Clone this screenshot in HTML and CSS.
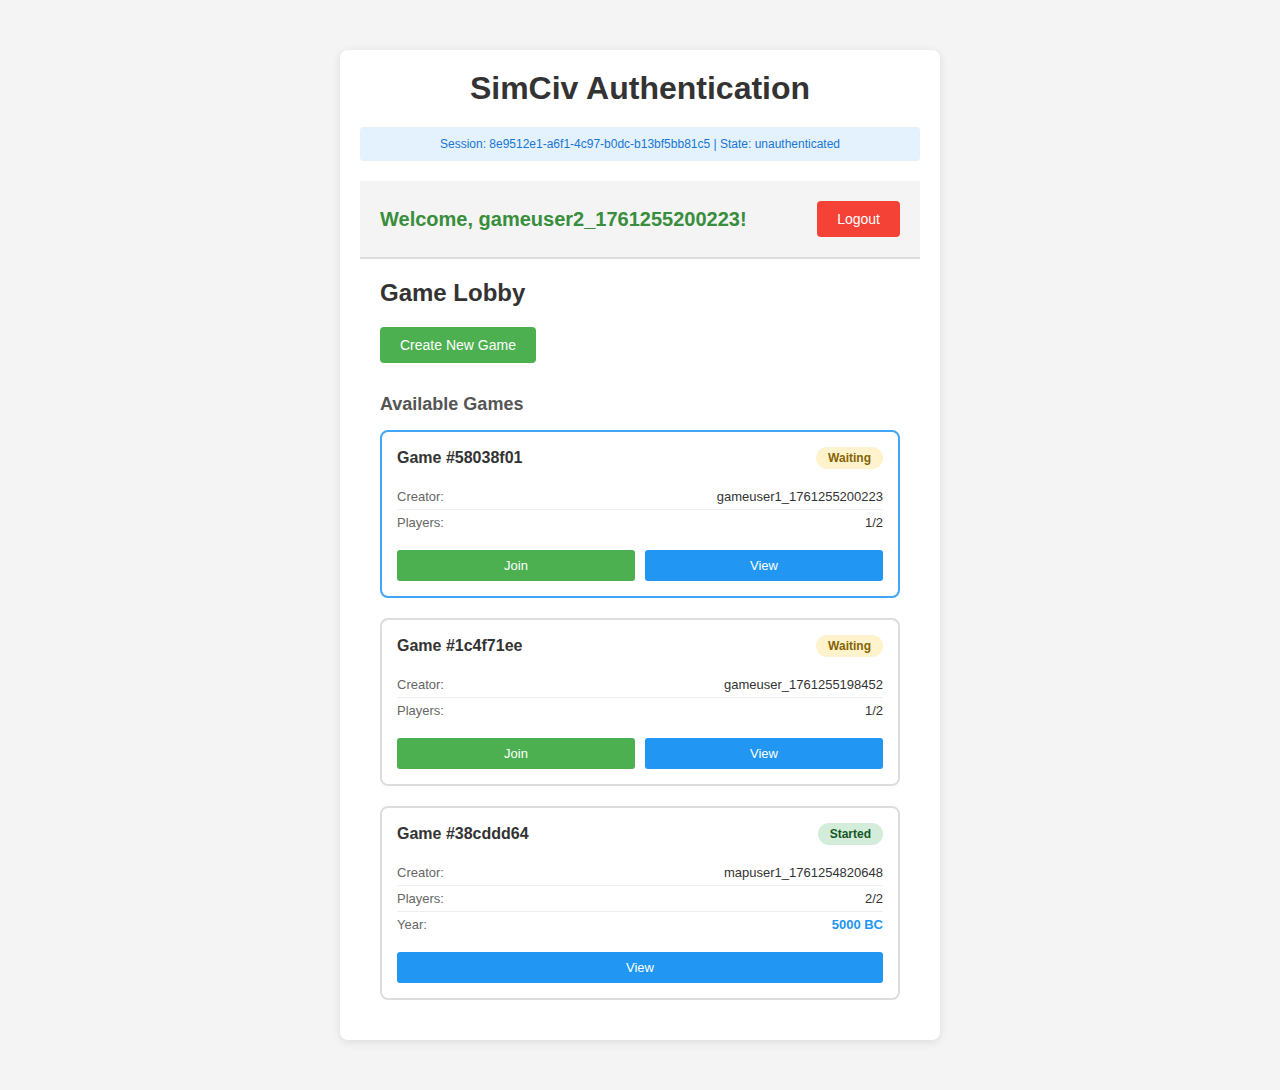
FILE: index.html
```html
<!DOCTYPE html>
<html lang="en">
<head>
<meta charset="utf-8">
<title>SimCiv Authentication</title>
<link rel="stylesheet" href="styles.css">
</head>
<body>
<div class="container">
  <h1 class="title">SimCiv Authentication</h1>
  <div class="session">Session: 8e9512e1-a6f1-4c97-b0dc-b13bf5bb81c5 | State: unauthenticated</div>
  <div class="welcome-bar">
    <span class="welcome">Welcome, gameuser2_1761255200223!</span>
    <button class="btn btn-red">Logout</button>
  </div>
  <div class="lobby">
    <h2 class="lobby-title">Game Lobby</h2>
    <button class="btn btn-green">Create New Game</button>
    <h3 class="games-title">Available Games</h3>
    <div class="game-list">
      <div class="game-card selected">
        <div class="game-head">
          <span class="game-name">Game #58038f01</span>
          <span class="badge waiting">Waiting</span>
        </div>
        <div class="info-row"><span class="label">Creator:</span><span class="value">gameuser1_1761255200223</span></div>
        <div class="info-row last"><span class="label">Players:</span><span class="value">1/2</span></div>
        <div class="actions">
          <button class="small-btn join">Join</button>
          <button class="small-btn view">View</button>
        </div>
      </div>
      <div class="game-card">
        <div class="game-head">
          <span class="game-name">Game #1c4f71ee</span>
          <span class="badge waiting">Waiting</span>
        </div>
        <div class="info-row"><span class="label">Creator:</span><span class="value">gameuser_1761255198452</span></div>
        <div class="info-row last"><span class="label">Players:</span><span class="value">1/2</span></div>
        <div class="actions">
          <button class="small-btn join">Join</button>
          <button class="small-btn view">View</button>
        </div>
      </div>
      <div class="game-card">
        <div class="game-head">
          <span class="game-name">Game #38cddd64</span>
          <span class="badge started">Started</span>
        </div>
        <div class="info-row"><span class="label">Creator:</span><span class="value">mapuser1_1761254820648</span></div>
        <div class="info-row"><span class="label">Players:</span><span class="value">2/2</span></div>
        <div class="info-row last"><span class="label">Year:</span><span class="value year">5000 BC</span></div>
        <div class="actions">
          <button class="small-btn view">View</button>
        </div>
      </div>
    </div>
  </div>
</div>
</body>
</html>
```

FILE: styles.css
```css
* { box-sizing: border-box; }
body {
  margin: 0;
  padding: 50px 0;
  background: #f4f4f4;
  font-family: "Liberation Sans", Arial, sans-serif;
  color: #333;
}
.container {
  width: 600px;
  margin: 0 auto;
  background: #fff;
  border-radius: 8px;
  box-shadow: 0 2px 10px rgba(0,0,0,0.1);
  padding: 20px;
}
.title {
  margin: 0 0 20px;
  font-size: 32px;
  line-height: 37px;
  text-align: center;
  color: #333;
}
.session {
  background: #e3f2fd;
  color: #1976d2;
  font-size: 12px;
  line-height: 14px;
  padding: 10px;
  text-align: center;
  border-radius: 4px;
  margin-bottom: 20px;
}
.welcome-bar {
  background: #f4f4f4;
  border-bottom: 2px solid #ddd;
  padding: 20px;
  display: flex;
  justify-content: space-between;
  align-items: center;
}
.welcome {
  color: #388e3c;
  font-size: 20px;
  font-weight: bold;
}
.btn {
  border: none;
  border-radius: 4px;
  color: #fff;
  font-family: inherit;
  font-size: 14px;
  line-height: 16px;
  padding: 10px 20px;
  cursor: pointer;
}
.btn-red { background: #f44336; }
.btn-green { background: #4caf50; }
.lobby { padding: 20px; }
.lobby-title {
  margin: 0 0 20px;
  font-size: 24px;
  line-height: 28px;
  color: #333;
}
.games-title {
  margin: 31px 0 15px;
  font-size: 18px;
  line-height: 21px;
  color: #555;
}
.game-list {
  display: flex;
  flex-direction: column;
  gap: 20px;
}
.game-card {
  border: 2px solid #ddd;
  border-radius: 8px;
  padding: 15px;
}
.game-card.selected { border-color: #42a5f5; }
.game-head {
  display: flex;
  justify-content: space-between;
  align-items: center;
  margin-bottom: 15px;
}
.game-name {
  font-size: 16px;
  font-weight: bold;
  color: #333;
}
.badge {
  font-size: 12px;
  line-height: 14px;
  font-weight: bold;
  padding: 4px 12px;
  border-radius: 12px;
}
.badge.waiting { background: #fff3cd; color: #856404; }
.badge.started { background: #d4edda; color: #155724; }
.info-row {
  display: flex;
  justify-content: space-between;
  font-size: 13px;
  line-height: 15px;
  padding: 5px 0;
  border-bottom: 1px solid #eee;
}
.info-row.last { border-bottom: none; }
.label { color: #666; }
.value { color: #333; }
.value.year { color: #2196f3; font-weight: bold; }
.actions {
  display: flex;
  gap: 10px;
  margin-top: 15px;
}
.small-btn {
  flex: 1;
  border: none;
  border-radius: 3px;
  color: #fff;
  font-family: inherit;
  font-size: 13px;
  line-height: 15px;
  padding: 8px;
  cursor: pointer;
}
.small-btn.join { background: #4caf50; }
.small-btn.view { background: #2196f3; }
```
